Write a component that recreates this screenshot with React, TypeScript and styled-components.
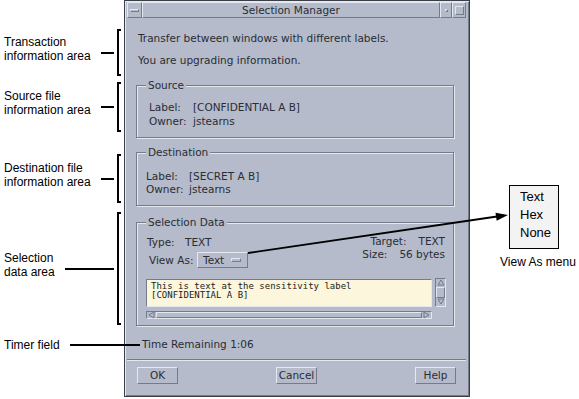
import styled, { createGlobalStyle, css } from "styled-components";

const BG = "#b5bbca";
const LIGHT = "#e4e8ef";
const DARK = "#747b8b";
const INK = "#2a2d35";

const GlobalStyle = createGlobalStyle`
  html, body { margin: 0; padding: 0; background: #ffffff; }
  body { font-family: "Liberation Sans", Arial, sans-serif; }
`;

const raised = css`
  box-sizing: border-box;
  border: 1px solid;
  border-color: ${LIGHT} ${DARK} ${DARK} ${LIGHT};
`;

const sunken = css`
  box-sizing: border-box;
  border: 1px solid;
  border-color: ${DARK} ${LIGHT} ${LIGHT} ${DARK};
`;

const Page = styled.div`
  position: relative;
  width: 579px;
  height: 399px;
  overflow: hidden;
  display: flex;
`;

/* ---------- left annotations ---------- */

const Notes = styled.div`
  position: relative;
  z-index: 1;
  flex: 0 0 124px;
  min-width: 0;
  display: flex;
  flex-direction: column;
`;

const Note = styled.div<{ $gap: number; $h: number }>`
  display: flex;
  align-items: center;
  margin-top: ${(p) => p.$gap}px;
  height: ${(p) => p.$h}px;
`;

const NoteText = styled.div<{ $lift: number }>`
  padding-left: 4px;
  margin-bottom: ${(p) => p.$lift}px;
  font-size: 12px;
  line-height: 14px;
  color: #000;
  white-space: nowrap;
`;

const Tick = styled.div<{ $w?: number }>`
  flex: ${(p) => (p.$w ? `0 0 ${p.$w}px` : "1 1 auto")};
  height: 2px;
  margin-left: 10px;
  background: #000;
`;

const Bracket = styled.div`
  align-self: stretch;
  flex: 0 0 4px;
  margin: 0 3px 0 3px;
  box-sizing: border-box;
  border: 2px solid #000;
  border-right: none;
`;

/* ---------- dialog ---------- */

const Window = styled.div`
  flex: 0 0 346px;
  height: 397px;
  box-sizing: border-box;
  display: flex;
  flex-direction: column;
  background: ${BG};
  border: 1px solid #3b3e46;
  box-shadow: inset 1px 1px 0 ${LIGHT}, inset -1px -1px 0 ${DARK};
  padding: 1px 3px 0 2px;
  font-family: "DejaVu Sans", "Liberation Sans", sans-serif;
  font-size: 10.5px;
  color: ${INK};
`;

const TitleBar = styled.div`
  display: flex;
  height: 16px;
`;

const TitleButton = styled.div<{ $w: number }>`
  ${raised};
  flex: 0 0 ${(p) => p.$w}px;
  display: flex;
  align-items: center;
  justify-content: center;
`;

const MenuGlyph = styled.div`
  ${raised};
  width: 9px;
  height: 3px;
`;

const MinGlyph = styled.div`
  ${raised};
  width: 3px;
  height: 3px;
`;

const MaxGlyph = styled.div`
  ${raised};
  width: 9px;
  height: 9px;
`;

const TitleText = styled.div`
  ${raised};
  flex: 1;
  text-align: center;
  line-height: 14px;
`;

const Body = styled.div`
  display: flex;
  flex-direction: column;
  padding: 0 12px 0 9px;
`;

const Message = styled.div<{ $mt: number }>`
  margin-top: ${(p) => p.$mt}px;
  padding-left: 2px;
  line-height: 14px;
`;

const Group = styled.div<{ $mt: number }>`
  margin-top: ${(p) => p.$mt}px;
  display: flex;
  flex-direction: column;
  border: 1px solid ${DARK};
  box-shadow: 1px 1px 0 ${LIGHT}, inset 1px 1px 0 ${LIGHT};
`;

const Legend = styled.div`
  align-self: flex-start;
  height: 14px;
  margin: -8px 0 0 9px;
  padding: 0 2px;
  line-height: 14px;
  background: ${BG};
`;

const InfoGrid = styled.div<{ $mt: number; $indent: number; $lh: number; $col: number }>`
  display: grid;
  grid-template-columns: ${(p) => p.$col}px auto;
  margin-top: ${(p) => p.$mt}px;
  padding: 0 0 9px ${(p) => p.$indent}px;
  line-height: ${(p) => p.$lh}px;
  white-space: nowrap;
`;

const DataHead = styled.div`
  display: flex;
  justify-content: space-between;
  margin-top: 6px;
  padding: 0 8px 0 10px;
`;

const DataLeft = styled.div`
  display: flex;
  flex-direction: column;
  gap: 3px;
`;

const DataRow = styled.div<{ $indent?: number }>`
  display: flex;
  align-items: center;
  line-height: 14px;
  padding-left: ${(p) => p.$indent ?? 0}px;
`;

const DataLabel = styled.span<{ $w: number }>`
  flex: 0 0 ${(p) => p.$w}px;
`;

const DataRight = styled.div`
  display: flex;
  flex-direction: column;
  align-items: flex-end;
  line-height: 13px;
`;

const Pair = styled.div`
  display: flex;
  gap: 12px;
`;

const OptionButton = styled.div`
  ${raised};
  width: 51px;
  height: 16px;
  display: flex;
  align-items: center;
  gap: 7px;
  padding-left: 5px;
  line-height: 14px;
`;

const OptionMark = styled.div`
  ${raised};
  width: 10px;
  height: 4px;
`;

const Scroller = styled.div`
  display: grid;
  grid-template-columns: 286px 11px;
  column-gap: 3px;
  row-gap: 4px;
  margin-top: 11px;
  padding: 0 0 6px 9px;
`;

const TextBox = styled.div`
  ${sunken};
  height: 28px;
  padding: 2px 4px;
  background: #fcf6dc;
  font-family: "DejaVu Sans Mono", "Liberation Mono", monospace;
  font-size: 9px;
  line-height: 9px;
  color: #222;
  white-space: pre;
`;

const VScroll = styled.div`
  ${sunken};
  height: 29px;
  margin-top: -1px;
  display: flex;
  flex-direction: column;
`;

const HScroll = styled.div`
  ${sunken};
  height: 8px;
  display: flex;
`;

const ArrowBox = styled.div<{ $w?: number; $h?: number }>`
  flex: 0 0 ${(p) => p.$w ?? p.$h ?? 9}px;
  display: flex;
  align-items: center;
  justify-content: center;
`;

const Thumb = styled.div`
  ${raised};
  flex: 1;
`;

const Timer = styled.div`
  margin-top: 11px;
  padding-left: 6px;
  line-height: 14px;
`;

const Separator = styled.div`
  margin-top: 8px;
  border-top: 1px solid ${DARK};
  border-bottom: 1px solid ${LIGHT};
`;

const ButtonRow = styled.div`
  display: flex;
  justify-content: space-between;
  margin-top: 6px;
  padding: 0 10px;
`;

const PushButton = styled.div`
  ${raised};
  width: 41px;
  height: 17px;
  line-height: 15px;
  text-align: center;
`;

/* ---------- right callout ---------- */

const Side = styled.div`
  flex: 1;
  min-width: 0;
  display: flex;
  flex-direction: column;
  padding: 185px 0 0 30px;
  font-size: 12px;
  color: #000;
`;

const MenuBox = styled.div`
  width: 50px;
  height: 64px;
  box-sizing: border-box;
  margin-left: 9px;
  padding: 2px 0 0 10px;
  border: 1.5px solid #000;
  background: #f3f3f3;
  font-size: 13px;
  line-height: 18px;
`;

const Caption = styled.div`
  margin-top: 6px;
  line-height: 14px;
  white-space: nowrap;
`;

const Overlay = styled.svg`
  position: absolute;
  left: 0;
  top: 0;
  pointer-events: none;
`;

const notes = [
  { lines: ["Transaction", "information area"], gap: 29, h: 47 },
  { lines: ["Source file", "information area"], gap: 6, h: 50 },
  { lines: ["Destination file", "information area"], gap: 22, h: 49 },
  { lines: ["Selection", "data area"], gap: 9, h: 113 },
];

function Arrow({ dir }: { dir: "up" | "down" | "left" | "right" }) {
  const pts = {
    up: "4,1 7,6 1,6",
    down: "1,1 7,1 4,6",
    left: "1,4 6,1 6,7",
    right: "1,1 6,4 1,7",
  }[dir];
  return (
    <svg width="8" height="8" viewBox="0 0 8 8">
      <polygon points={pts} fill={BG} stroke={DARK} strokeWidth="1" />
    </svg>
  );
}

export default function App() {
  return (
    <Page>
      <GlobalStyle />
      <Notes>
        {notes.map((n) => (
          <Note key={n.lines[0]} $gap={n.gap} $h={n.h}>
            <NoteText $lift={8}>
              {n.lines[0]}
              <br />
              {n.lines[1]}
            </NoteText>
            <Tick />
            <Bracket />
          </Note>
        ))}
        <Note $gap={12} $h={15}>
          <NoteText $lift={0}>Timer field</NoteText>
          <Tick $w={70} />
        </Note>
      </Notes>

      <Window>
        <TitleBar>
          <TitleButton $w={15}>
            <MenuGlyph />
          </TitleButton>
          <TitleText>Selection Manager</TitleText>
          <TitleButton $w={12}>
            <MinGlyph />
          </TitleButton>
          <TitleButton $w={14}>
            <MaxGlyph />
          </TitleButton>
        </TitleBar>

        <Body>
          <Message $mt={13}>Transfer between windows with different labels.</Message>
          <Message $mt={8}>You are upgrading information.</Message>

          <Group $mt={18}>
            <Legend>Source</Legend>
            <InfoGrid $mt={8} $indent={12} $lh={14} $col={44}>
              <span>Label:</span>
              <span>[CONFIDENTIAL A B]</span>
              <span>Owner:</span>
              <span>jstearns</span>
            </InfoGrid>
          </Group>

          <Group $mt={14}>
            <Legend>Destination</Legend>
            <InfoGrid $mt={11} $indent={9} $lh={13} $col={43}>
              <span>Label:</span>
              <span>[SECRET A B]</span>
              <span>Owner:</span>
              <span>jstearns</span>
            </InfoGrid>
          </Group>

          <Group $mt={16}>
            <Legend>Selection Data</Legend>
            <DataHead>
              <DataLeft>
                <DataRow>
                  <DataLabel $w={38}>Type:</DataLabel>
                  <span>TEXT</span>
                </DataRow>
                <DataRow $indent={2}>
                  <DataLabel $w={48}>View As:</DataLabel>
                  <OptionButton>
                    <span>Text</span>
                    <OptionMark />
                  </OptionButton>
                </DataRow>
              </DataLeft>
              <DataRight>
                <Pair>
                  <span>Target:</span>
                  <span>TEXT</span>
                </Pair>
                <Pair>
                  <span>Size:</span>
                  <span>56 bytes</span>
                </Pair>
              </DataRight>
            </DataHead>
            <Scroller>
              <TextBox>
                {"This is text at the sensitivity label\n[CONFIDENTIAL A B]"}
              </TextBox>
              <VScroll>
                <ArrowBox $h={8}>
                  <Arrow dir="up" />
                </ArrowBox>
                <Thumb />
                <ArrowBox $h={8}>
                  <Arrow dir="down" />
                </ArrowBox>
              </VScroll>
              <HScroll>
                <ArrowBox $w={9}>
                  <Arrow dir="left" />
                </ArrowBox>
                <Thumb />
                <ArrowBox $w={9}>
                  <Arrow dir="right" />
                </ArrowBox>
              </HScroll>
            </Scroller>
          </Group>

          <Timer>Time Remaining 1:06</Timer>
        </Body>

        <Separator />
        <ButtonRow>
          <PushButton>OK</PushButton>
          <PushButton>Cancel</PushButton>
          <PushButton>Help</PushButton>
        </ButtonRow>
      </Window>

      <Side>
        <MenuBox>
          <div>Text</div>
          <div>Hex</div>
          <div>None</div>
        </MenuBox>
        <Caption>View As menu</Caption>
      </Side>

      <Overlay width="579" height="399" viewBox="0 0 579 399">
        <line x1="248" y1="253" x2="497" y2="216.5" stroke="#000" strokeWidth="1.8" />
        <polygon points="508,215 496.7,220.7 495.5,212.7" fill="#000" />
      </Overlay>
    </Page>
  );
}
